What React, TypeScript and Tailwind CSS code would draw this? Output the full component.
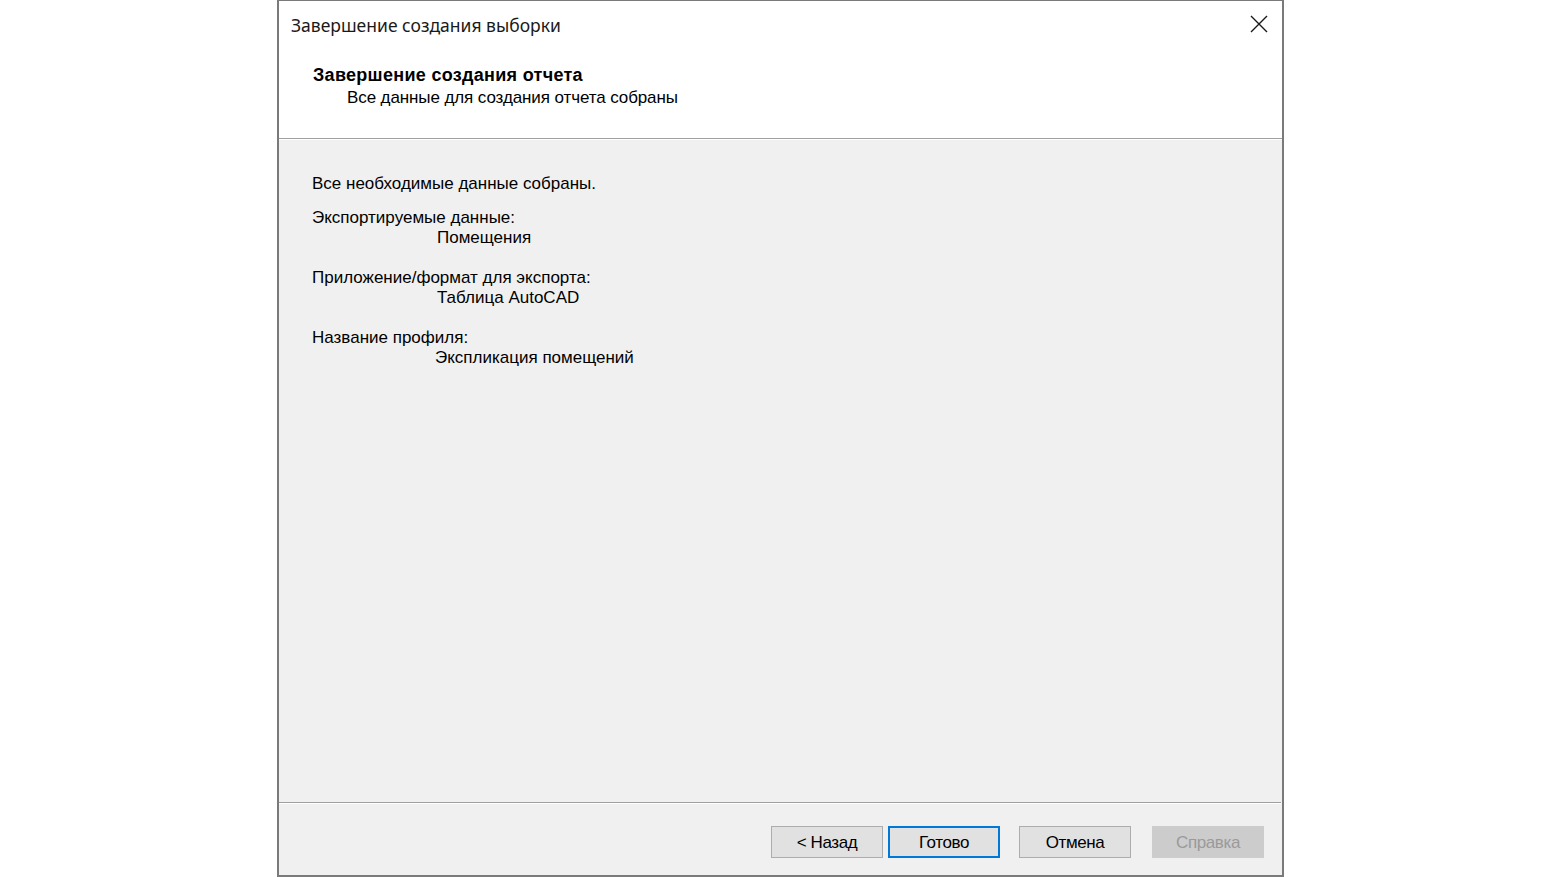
const infoRows = [
  { label: "Экспортируемые данные:", value: "Помещения", indent: "pl-[125px]", gap: "pt-[14px]" },
  { label: "Приложение/формат для экспорта:", value: "Таблица AutoCAD", indent: "pl-[125px]", gap: "pt-[20px]" },
  { label: "Название профиля:", value: "Экспликация помещений", indent: "pl-[123px]", gap: "pt-[20px]" },
];

function WizardButton({
  children,
  primary = false,
  disabled = false,
}: {
  children: string;
  primary?: boolean;
  disabled?: boolean;
}) {
  const tone = disabled
    ? "border border-[#cccccc] bg-[#cccccc] text-[#9a9a9a]"
    : primary
      ? "border-2 border-[#0078d7] bg-[#e1e1e1] text-[#000000]"
      : "border border-[#adadad] bg-[#e1e1e1] text-[#000000]";
  return (
    <button
      type="button"
      disabled={disabled}
      className={`flex h-[32px] w-[112px] items-center justify-center pt-[2px] text-[17px] tracking-[-0.4px] ${tone}`}
    >
      {children}
    </button>
  );
}

function CloseGlyph() {
  return (
    <svg width="18" height="18" viewBox="0 0 18 18" className="text-[#1a1a1a]">
      <path d="M1 1 L17 17 M17 1 L1 17" stroke="currentColor" strokeWidth="1.4" fill="none" />
    </svg>
  );
}

export default function App() {
  return (
    <div className="flex h-[877px] w-[1560px] bg-white font-['Liberation_Sans',Arial,sans-serif] text-[#000000]">
      <div className="ml-[277px] flex h-[877px] w-[1007px] flex-col border-x-2 border-b-2 border-t border-[#7a7a7a]">
        {/* title bar + wizard header share the white band */}
        <div className="flex h-[137px] flex-col bg-white">
          <div className="flex items-start justify-between pl-[12px] pr-[14px] pt-[13px]">
            <span className="font-['Noto_Sans',sans-serif] text-[17.5px] leading-[22px] text-[#1a1a1a]">
              Завершение создания выборки
            </span>
            <div className="mt-[1px]">
              <CloseGlyph />
            </div>
          </div>
          <div className="pl-[34px] pt-[29px]">
            <div className="text-[18px] font-bold leading-[20px] tracking-[0.3px]">
              Завершение создания отчета
            </div>
            <div className="pl-[34px] pt-[3px] text-[17px] leading-[20px] tracking-[-0.1px]">
              Все данные для создания отчета собраны
            </div>
          </div>
        </div>
        <div className="h-[1px] bg-[#a0a0a0]" />
        <div className="h-[1px] bg-white" />

        <div className="flex flex-1 flex-col bg-[#f0f0f0]">
          <div className="flex flex-1 flex-col pl-[33px] pt-[34px] text-[17px] leading-[20px]">
            <div>Все необходимые данные собраны.</div>
            {infoRows.map((row) => (
              <div key={row.label} className={row.gap}>
                <div>{row.label}</div>
                <div className={row.indent}>{row.value}</div>
              </div>
            ))}
          </div>

          <div className="mr-[1px] h-[1px] bg-[#a0a0a0]" />
          <div className="mr-[1px] h-[1px] bg-white" />

          <div className="flex h-[71px] items-start justify-end pr-[18px] pt-[22px]">
            <WizardButton>{"< Назад"}</WizardButton>
            <div className="ml-[5px]">
              <WizardButton primary>Готово</WizardButton>
            </div>
            <div className="ml-[19px]">
              <WizardButton>Отмена</WizardButton>
            </div>
            <div className="ml-[21px]">
              <WizardButton disabled>Справка</WizardButton>
            </div>
          </div>
        </div>
      </div>
    </div>
  );
}
